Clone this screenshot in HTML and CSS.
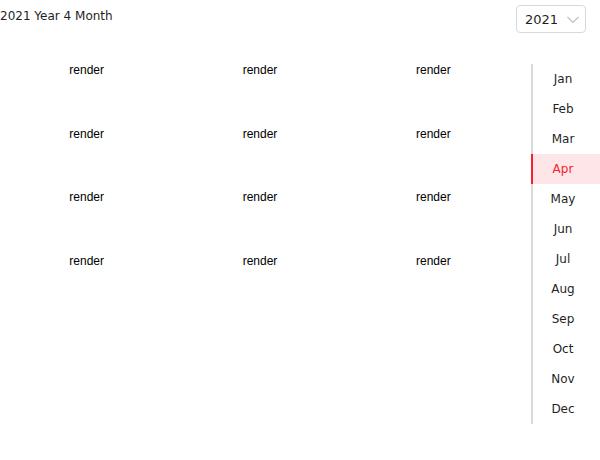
FILE: index.html
```html
<!DOCTYPE html>
<html>
<head>
<meta charset="utf-8">
<link rel="stylesheet" href="styles.css">
</head>
<body>
<div class="header">
  <div class="title">2021 Year 4 Month</div>
  <div class="select">
    <span class="select-value">2021</span>
    <svg class="chev" width="12" height="8" viewBox="0 0 12 8"><path d="M0.5 1 L6 6.5 L11.5 1" fill="none" stroke="#bfbfbf" stroke-width="1.1"/></svg>
  </div>
</div>
<div class="main">
  <div class="grid">
    <div class="cell">render</div><div class="cell">render</div><div class="cell">render</div>
    <div class="cell">render</div><div class="cell">render</div><div class="cell">render</div>
    <div class="cell">render</div><div class="cell">render</div><div class="cell">render</div>
    <div class="cell">render</div><div class="cell">render</div><div class="cell">render</div>
  </div>
  <ul class="months">
    <li>Jan</li><li>Feb</li><li>Mar</li><li class="active">Apr</li><li>May</li><li>Jun</li>
    <li>Jul</li><li>Aug</li><li>Sep</li><li>Oct</li><li>Nov</li><li>Dec</li>
  </ul>
</div>
</body>
</html>
```
FILE: styles.css
```css
html, body { margin: 0; padding: 0; background: #fff; }
body { font-family: "DejaVu Sans", sans-serif; font-size: 12px; color: #1f1f1f; width: 600px; }
.header { display: flex; justify-content: space-between; align-items: flex-start; height: 64px; }
.title { line-height: 14px; padding-top: 9px; }
.select { margin-top: 5px; margin-right: 14px; box-sizing: border-box; width: 70px; height: 28px; border: 1px solid #d9d9d9; border-radius: 4px; display: flex; align-items: center; padding-left: 8px; gap: 9px; }
.select-value { font-size: 13px; color: #1f1f1f; }
.chev { display: block; margin-top: 1px; }
.main { display: flex; }
.grid { width: 520px; display: grid; grid-template-columns: repeat(3, 1fr); grid-auto-rows: 63.7px; align-content: start; }
.cell { font-family: "Liberation Sans", Arial, sans-serif; font-size: 12px; color: #000; text-align: center; line-height: 14px; padding-top: 0; margin-top: -1px; }
.months { list-style: none; margin: 0 0 0 11px; padding: 0; border-left: 2px solid #d9d9d9; width: 67px; }
.months li { height: 30px; line-height: 30px; text-align: center; font-size: 12px; color: #1f1f1f; padding-right: 7px; }
.months li.active { background: #fee6e8; color: #f5222d; box-shadow: -2px 0 0 #f5222d; }
```
